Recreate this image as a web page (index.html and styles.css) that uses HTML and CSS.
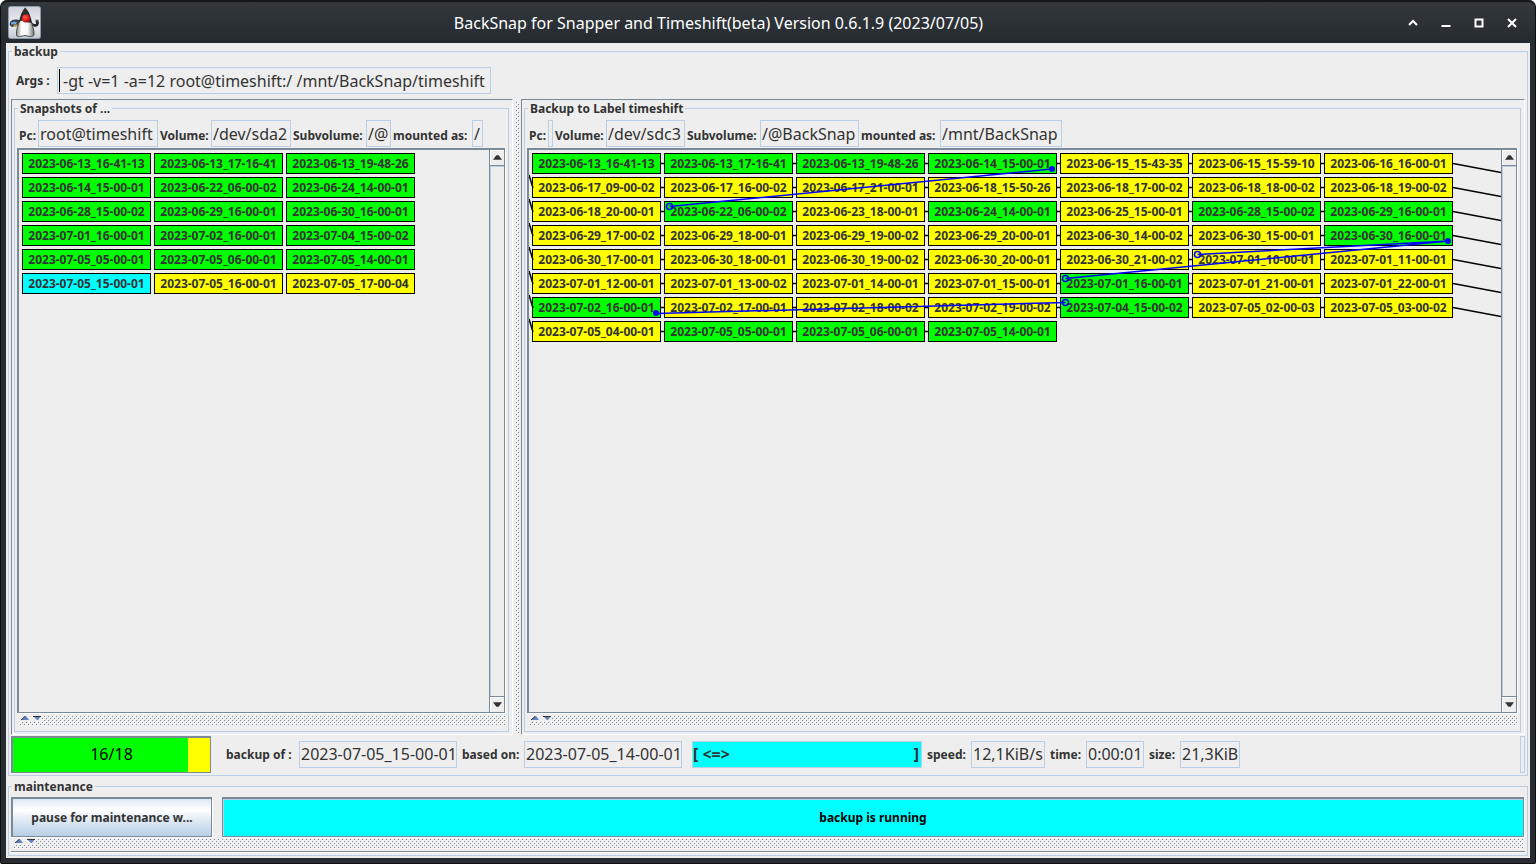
FILE: index.html
```html
<!DOCTYPE html>
<html lang="en">
<head>
<meta charset="utf-8">
<title>BackSnap for Snapper and Timeshift(beta) Version 0.6.1.9 (2023/07/05)</title>
<link rel="stylesheet" href="styles.css">
</head>
<body>
<div class="window">
  <header class="titlebar">
    <svg class="duke" viewBox="0 0 33 33" aria-hidden="true">
      <defs>
        <linearGradient id="tile" x1="0" y1="0" x2="0" y2="1"><stop offset="0" stop-color="#cfd1da"/><stop offset=".55" stop-color="#ececf1"/><stop offset="1" stop-color="#c5c8d3"/></linearGradient>
        <linearGradient id="belly" x1="0" y1="0" x2="1" y2="0"><stop offset="0" stop-color="#8a8a8a"/><stop offset=".3" stop-color="#fff"/><stop offset=".65" stop-color="#f4f4f4"/><stop offset="1" stop-color="#6e6e6e"/></linearGradient>
        <radialGradient id="nose" cx=".4" cy=".35" r=".7"><stop offset="0" stop-color="#ff5a4e"/><stop offset=".6" stop-color="#e3201c"/><stop offset="1" stop-color="#8c0d0b"/></radialGradient>
      </defs>
      <rect x=".5" y=".5" width="32" height="32" rx="2" fill="url(#tile)" stroke="#8c9aab"/>
      <path d="M12 14C8 13 4 13 2 16L1.500 19 4 21 10 19Z" fill="#34363b"/>
      <path d="M3 16.500Q6 15 9 16L8 18.500 3 18.500Z" fill="#6ba5dc"/>
      <path d="M5 19.500 9 18 9.500 20 7 21Z" fill="#c9953f"/>
      <path d="M22 15 26 18 28 18 27.500 14 28.500 13.500 29 15 30 13 31 17 30 20 27 21 23 19Z" fill="#292a2d"/>
      <path d="M12 14C10 19 8 24 8.500 29 9 32 13 30 17 29.500 21 30 24 32 26 29 26.500 24 24 18 22.500 14Z" fill="url(#belly)" stroke="#4c4d50"/>
      <path d="M17 1.500C14 5 12 10 11 16L14.500 14 18 16 24 17C23 11 21 5 17 1.500Z" fill="#2b2b2e"/>
      <circle cx="18" cy="12.500" r="4" fill="url(#nose)"/>
    </svg>
    <h1 class="title">BackSnap for Snapper and Timeshift(beta) Version 0.6.1.9 (2023/07/05)</h1>
    <div class="controls">
      <button aria-label="Shade"><svg viewBox="0 0 12 12"><path d="M2 8 6 4 10 8"/></svg></button>
      <button aria-label="Minimize"><svg viewBox="0 0 12 12"><path d="M1.500 9H10.500"/></svg></button>
      <button aria-label="Maximize"><svg viewBox="0 0 12 12"><path d="M2.500 2.500H9.500V9.500H2.500Z"/></svg></button>
      <button aria-label="Close"><svg viewBox="0 0 12 12"><path d="M2 2 10 10M10 2 2 10"/></svg></button>
    </div>
  </header>

  <main class="content">
    <fieldset class="group backup">
      <legend>backup</legend>
      <div class="args">
        <label for="args">Args :</label>
        <input class="field args-field" id="args" value="-gt -v=1 -a=12 root@timeshift:/ /mnt/BackSnap/timeshift">
      </div>

      <div class="split">
        <div class="pane">
          <fieldset class="group inner">
            <legend>Snapshots of ...</legend>
            <div class="config">
              <label class="l-pc" for="s-pc">Pc:</label><input class="field w-pc" id="s-pc" value="root@timeshift" readonly>
              <label class="l-volume" for="s-vol">Volume:</label><input class="field w-volume" id="s-vol" value="/dev/sda2" readonly>
              <label class="l-sub" for="s-sub">Subvolume:</label><input class="field w-at" id="s-sub" value="/@" readonly>
              <label class="l-mount" for="s-mnt">mounted as:</label><input class="field w-root" id="s-mnt" value="/" readonly>
            </div>
            <div class="scroll">
              <div class="canvas">
                <ul class="chips">
                  <li class="g">2023-06-13_16-41-13</li><li class="g">2023-06-13_17-16-41</li><li class="g">2023-06-13_19-48-26</li>
                  <li class="g">2023-06-14_15-00-01</li><li class="g">2023-06-22_06-00-02</li><li class="g">2023-06-24_14-00-01</li>
                  <li class="g">2023-06-28_15-00-02</li><li class="g">2023-06-29_16-00-01</li><li class="g">2023-06-30_16-00-01</li>
                  <li class="g">2023-07-01_16-00-01</li><li class="g">2023-07-02_16-00-01</li><li class="g">2023-07-04_15-00-02</li>
                  <li class="g">2023-07-05_05-00-01</li><li class="g">2023-07-05_06-00-01</li><li class="g">2023-07-05_14-00-01</li>
                  <li class="c">2023-07-05_15-00-01</li><li>2023-07-05_16-00-01</li><li>2023-07-05_17-00-04</li>
                </ul>
              </div>
              <div class="scrollbar">
                <button aria-label="Scroll up"><svg viewBox="0 0 8 4"><path d="M0 4 3 0H5L8 4Z"/></svg></button>
                <div class="track"></div>
                <button aria-label="Scroll down"><svg viewBox="0 0 8 4"><path d="M0 0 3 4H5L8 0Z"/></svg></button>
              </div>
            </div>
            <div class="grip"><svg viewBox="0 0 22 5"><path class="tri" d="M1 4 5 0H6L9 4ZM13 0H21L18 4H17Z"/><path class="edge" d="M1 4 5 .5M13 .5H21"/></svg></div>
          </fieldset>
        </div>
        <div class="divider"></div>
        <div class="pane">
          <fieldset class="group inner">
            <legend>Backup to Label timeshift</legend>
            <div class="config">
              <label class="l-pc" for="b-pc">Pc:</label><input class="field w-empty" id="b-pc" value="" readonly>
              <label class="l-volume" for="b-vol">Volume:</label><input class="field w-target" id="b-vol" value="/dev/sdc3" readonly>
              <label class="l-sub" for="b-sub">Subvolume:</label><input class="field w-sub" id="b-sub" value="/@BackSnap" readonly>
              <label class="l-mount" for="b-mnt">mounted as:</label><input class="field w-mount" id="b-mnt" value="/mnt/BackSnap" readonly>
            </div>
            <div class="scroll">
              <div class="canvas">
                <ul class="chips">
                  <li class="g">2023-06-13_16-41-13</li><li class="g">2023-06-13_17-16-41</li><li class="g">2023-06-13_19-48-26</li><li class="g">2023-06-14_15-00-01</li><li>2023-06-15_15-43-35</li><li>2023-06-15_15-59-10</li><li>2023-06-16_16-00-01</li>
                  <li>2023-06-17_09-00-02</li><li>2023-06-17_16-00-02</li><li>2023-06-17_21-00-01</li><li>2023-06-18_15-50-26</li><li>2023-06-18_17-00-02</li><li>2023-06-18_18-00-02</li><li>2023-06-18_19-00-02</li>
                  <li>2023-06-18_20-00-01</li><li class="g">2023-06-22_06-00-02</li><li>2023-06-23_18-00-01</li><li class="g">2023-06-24_14-00-01</li><li>2023-06-25_15-00-01</li><li class="g">2023-06-28_15-00-02</li><li class="g">2023-06-29_16-00-01</li>
                  <li>2023-06-29_17-00-02</li><li>2023-06-29_18-00-01</li><li>2023-06-29_19-00-02</li><li>2023-06-29_20-00-01</li><li>2023-06-30_14-00-02</li><li>2023-06-30_15-00-01</li><li class="g">2023-06-30_16-00-01</li>
                  <li>2023-06-30_17-00-01</li><li>2023-06-30_18-00-01</li><li>2023-06-30_19-00-02</li><li>2023-06-30_20-00-01</li><li>2023-06-30_21-00-02</li><li>2023-07-01_10-00-01</li><li>2023-07-01_11-00-01</li>
                  <li>2023-07-01_12-00-01</li><li>2023-07-01_13-00-02</li><li>2023-07-01_14-00-01</li><li>2023-07-01_15-00-01</li><li class="g">2023-07-01_16-00-01</li><li>2023-07-01_21-00-01</li><li>2023-07-01_22-00-01</li>
                  <li class="g">2023-07-02_16-00-01</li><li>2023-07-02_17-00-01</li><li>2023-07-02_18-00-02</li><li>2023-07-02_19-00-02</li><li class="g">2023-07-04_15-00-02</li><li>2023-07-05_02-00-03</li><li>2023-07-05_03-00-02</li>
                  <li>2023-07-05_04-00-01</li><li class="g">2023-07-05_05-00-01</li><li class="g">2023-07-05_06-00-01</li><li class="g">2023-07-05_14-00-01</li>
                </ul>
                <svg class="links" width="972" height="200" viewBox="0 -1 972 200" aria-hidden="true">
                  <defs>
                    <path id="j" d="M131 12.500H136M263 12.500H268M395 12.500H400"/>
                    <path id="k" d="M527 12.500H532M659 12.500H664M791 12.500H796M924 12.500 972 21.500M0 24 4 37"/>
                  </defs>
                  <g class="black">
                    <use href="#j"/><use href="#j" y="24"/><use href="#j" y="48"/><use href="#j" y="72"/><use href="#j" y="96"/><use href="#j" y="120"/><use href="#j" y="144"/><use href="#j" y="168"/>
                    <use href="#k"/><use href="#k" y="24"/><use href="#k" y="48"/><use href="#k" y="72"/><use href="#k" y="96"/><use href="#k" y="120"/><use href="#k" y="144"/>
                  </g>
                  <g class="blue">
                    <path d="M523 18 140.500 55.500M919.500 90 668.500 103.500M919.500 90 536.500 127.500M127.500 162.500 536.500 151.500"/>
                    <circle cx="140.500" cy="55.500" r="3"/><circle cx="668.500" cy="103.500" r="3"/><circle cx="536.500" cy="127.500" r="3"/><circle cx="536.500" cy="151.500" r="3"/>
                    <circle class="dot" cx="523" cy="18" r="3"/><circle class="dot" cx="919" cy="90" r="3"/><circle class="dot" cx="127" cy="162" r="3"/>
                  </g>
                </svg>
              </div>
              <div class="scrollbar">
                <button aria-label="Scroll up"><svg viewBox="0 0 8 4"><path d="M0 4 3 0H5L8 4Z"/></svg></button>
                <div class="track"></div>
                <button aria-label="Scroll down"><svg viewBox="0 0 8 4"><path d="M0 0 3 4H5L8 0Z"/></svg></button>
              </div>
            </div>
            <div class="grip"><svg viewBox="0 0 22 5"><path class="tri" d="M1 4 5 0H6L9 4ZM13 0H21L18 4H17Z"/><path class="edge" d="M1 4 5 .5M13 .5H21"/></svg></div>
          </fieldset>
        </div>
      </div>

      <div class="status">
        <div class="progress" role="progressbar" aria-valuenow="16" aria-valuemax="18"><div class="fill" style="width:89%"></div><span>16/18</span></div>
        <label class="l-backup" for="of">backup of :</label><input class="field w-snap" id="of" value="2023-07-05_15-00-01" readonly>
        <label class="l-based" for="on">based on:</label><input class="field w-snap" id="on" value="2023-07-05_14-00-01" readonly>
        <div class="activity"><span>[ &lt;=&gt;</span><span>]</span></div>
        <label class="l-speed" for="speed">speed:</label><input class="field w-speed" id="speed" value="12,1KiB/s" readonly>
        <label class="l-time" for="time">time:</label><input class="field w-time" id="time" value="0:00:01" readonly>
        <label class="l-size" for="size">size:</label><input class="field w-size" id="size" value="21,3KiB" readonly>
        <div class="stub"></div>
      </div>
    </fieldset>

    <fieldset class="group maintenance">
      <legend>maintenance</legend>
      <div class="actions">
        <button class="pause">pause for maintenance w...</button>
        <div class="running" role="status">backup is running</div>
      </div>
      <div class="grip wide"><svg viewBox="0 0 22 5"><path class="tri" d="M1 4 5 0H6L9 4ZM13 0H21L18 4H17Z"/><path class="edge" d="M1 4 5 .5M13 .5H21"/></svg></div>
      <div class="baseline"></div>
    </fieldset>
  </main>
</div>
</body>
</html>
```
FILE: styles.css
```css
* { box-sizing: border-box; }
body {
  margin: 0;
  background: #fff;
  color: #333;
  font: bold 12px/17px "Noto Sans", "Open Sans", sans-serif;
}
button { font: inherit; color: inherit; padding: 0; }

.window {
  height: 100vh;
  display: flex;
  flex-direction: column;
  padding: 0 5px 5px;
  border: 1px solid #0b0d0f;
  border-top: 0;
  border-radius: 7px 7px 2px 2px;
  background: #262c31;
}
.titlebar {
  display: flex;
  align-items: center;
  height: 43px;
  flex: none;
  margin: 0 -5px;
  padding: 0 7px;
  border-top: 2px solid #14181a;
  border-radius: 7px 7px 0 0;
  background: linear-gradient(#32383c, #242a2f);
  color: #fff;
}
.duke { width: 33px; height: 33px; flex: none; }
.title { flex: 1; margin: 0; text-align: center; font-size: 16px; font-weight: 400; line-height: 22px; }
.controls { display: flex; }
.controls button { width: 33px; height: 33px; border: 0; background: none; display: grid; place-items: center; }
.controls svg { width: 12px; height: 12px; fill: none; stroke: #fff; stroke-width: 2; }

.content { flex: 1; min-height: 0; display: flex; flex-direction: column; gap: 2px; padding: 0 2px 2px; background: #eee; }
.group { min-width: 0; margin: 0; padding: 0 2px; border: 1px solid #b8cfe5; display: flex; flex-direction: column; }
.group legend { margin-left: 1px; padding: 0 2px; height: 17px; }
.backup { flex: 1; min-height: 0; padding-bottom: 2px; }

.field {
  height: 27px;
  padding: 0 1px;
  border: 1px solid #b8cfe5;
  border-radius: 0;
  background: #eee;
  color: #333;
  font: 400 16px/22px "Noto Sans", "Open Sans", sans-serif;
  outline: 0;
}
.args { display: flex; align-items: center; padding: 7px 5px 5px; }
.args label { width: 41px; }
.args-field { width: 434px; padding-left: 5px; background: linear-gradient(#000, #000) 1px 1px / 1px 23px no-repeat #eee; }

.split { flex: 1; min-height: 0; display: grid; grid-template-columns: minmax(0, 502fr) 8px minmax(0, 1004fr); }
.pane { display: flex; min-height: 0; padding: 0 3px 2px 2px; border: 1px solid #fff; border-top-color: #7a8a99; border-left-color: #7a8a99; }
.inner { flex: 1; padding: 0 3px 5px 2px; min-height: 0; }
.inner legend { margin-left: 1px; }
.config { display: flex; align-items: baseline; gap: 2px; padding: 3px 2px 1px; }
label { white-space: nowrap; }
.l-pc { width: 17px; }
.l-volume { width: 49px; }
.l-sub { width: 71px; }
.l-mount { width: 77px; }
.w-pc { width: 120px; }
.w-volume { width: 80px; }
.w-target { width: 79px; }
.w-at { width: 25px; }
.w-root { width: 11px; }
.w-empty { width: 5px; }
.w-sub { width: 99px; }
.w-mount { width: 122px; }

.scroll { flex: 1; min-height: 0; display: flex; border: solid #7a8a99; border-width: 2px 1px 1px 2px; box-shadow: 1px 1px #fff; margin-bottom: 3px; }
.canvas { position: relative; flex: 1; min-width: 0; overflow: hidden; }
.chips { list-style: none; margin: 0; padding: 3px; display: flex; flex-wrap: wrap; gap: 3px; }
.chips li { width: 129px; height: 21px; border: 1px solid #000; background: #ff0; text-align: center; line-height: 19px; }
.chips .g { background: #0f0; }
.chips .c { background: #0ff; }
.links { position: absolute; left: 0; top: 0; }
.black { stroke: #000; stroke-width: 1.5; fill: none; }
.blue { stroke: #00f; stroke-width: 1.5; fill: none; }
.blue .dot { fill: #00f; stroke: none; }

.scrollbar { width: 15px; flex: none; display: flex; flex-direction: column; border-left: 1px solid #7a8a99; }
.scrollbar button { height: 16px; border: 0; border-bottom: 1px solid #7a8a99; background: #eee; display: grid; place-items: center; box-shadow: inset 1px 1px #fff; }
.scrollbar button:last-child { border-bottom: 0; border-top: 1px solid #7a8a99; }
.scrollbar svg { width: 9px; height: 5px; fill: #333; }
.track { flex: 1; border: solid #b8cfe5; border-width: 1px 0 0 1px; }

.grip, .divider {
  background-image:
    conic-gradient(at 1px 1px, transparent 75%, #7a8a99 0),
    conic-gradient(at 1px 1px, transparent 75%, #7a8a99 0),
    conic-gradient(at 1px 1px, transparent 75%, #fff 0),
    conic-gradient(at 1px 1px, transparent 75%, #fff 0);
  background-size: 4px 4px;
  background-position: 0 0, 2px 2px, 1px 1px, 3px 3px;
}
.grip { height: 10px; flex: none; margin-left: 3px; }
.grip svg { display: block; width: 22px; height: 5px; background: #eee; }
.tri { fill: #6382bf; }
.edge { fill: none; stroke: #333; }
.divider { margin: 3px 2px 2px 3px; }

.status { display: flex; align-items: center; height: 38px; flex: none; }
.progress { position: relative; width: 200px; height: 37px; border: solid #7a8a99; border-width: 2px 1px 1px 2px; background: #ff0; }
.fill { height: 100%; background: #0f0; }
.progress span { position: absolute; inset: 0; display: grid; place-items: center; color: #000; font-size: 16px; font-weight: 400; }
.l-backup { width: 88px; padding-left: 15px; }
.l-based { width: 67px; padding-left: 5px; }
.l-speed { width: 49px; padding-left: 5px; }
.l-time { width: 41px; padding-left: 5px; }
.l-size { width: 36px; padding-left: 5px; }
.w-snap { width: 158px; }
.w-speed { width: 74px; }
.w-time { width: 58px; }
.w-size { width: 60px; }
.activity { display: flex; justify-content: space-between; width: 230px; height: 27px; margin-left: 10px; padding: 0 2px 0 0; border: 1px solid #b8cfe5; background: #0ff; font-size: 16px; line-height: 25px; }
.stub { width: 5px; height: 37px; margin-left: auto; border: 1px solid #b8cfe5; }

.maintenance { padding-bottom: 2px; }
.actions { display: flex; gap: 10px; padding: 2px 1px 2px 0; }
.pause { width: 201px; height: 40px; border: solid #7a8a99; border-width: 2px 1px 1px 2px; background: linear-gradient(#dde8f3, #fff 30%, #dde8f3 60%, #b8cfe5); box-shadow: 1px 1px #fff; }
.running { flex: 1; height: 40px; border: solid #7a8a99; border-width: 2px 1px 1px; background: #0ff; color: #000; text-align: center; line-height: 37px; box-shadow: inset 1px 1px #b8cfe5, 1px 1px #fff; }
.wide { margin: 0 2px 0 3px; }
.baseline { height: 2px; margin-top: 2px; border-top: 1px solid #7a8a99; border-bottom: 1px solid #fff; }
```
